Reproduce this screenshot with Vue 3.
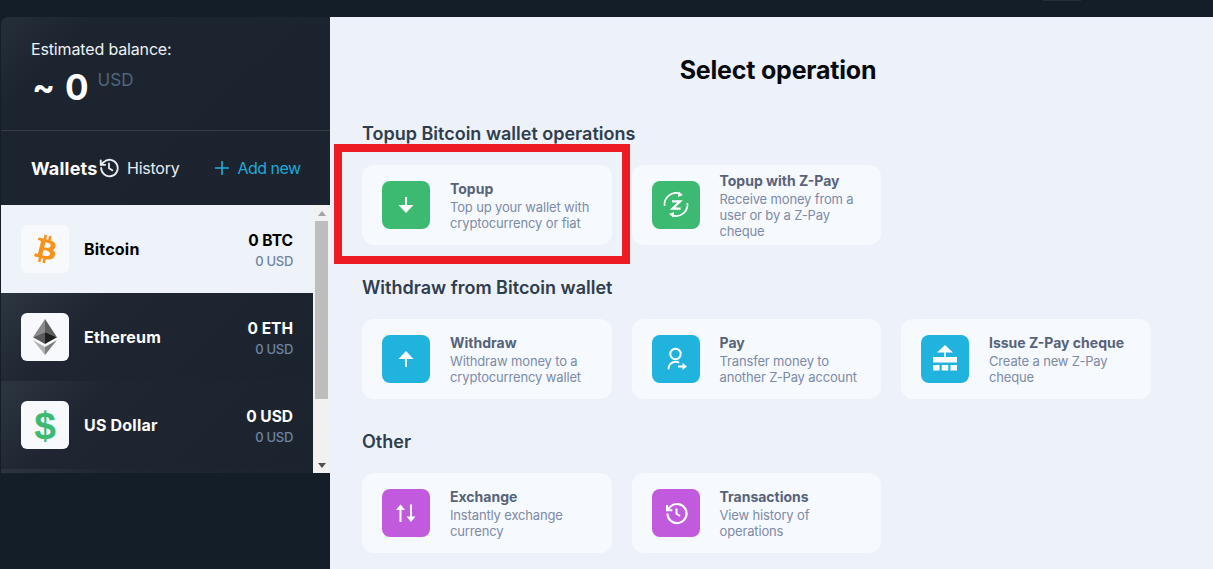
<script setup>
const wallets = [
  { id: 'btc', name: 'Bitcoin', amount: '0 BTC', usd: '0 USD', active: true },
  { id: 'eth', name: 'Ethereum', amount: '0 ETH', usd: '0 USD' },
  { id: 'usd', name: 'US Dollar', amount: '0 USD', usd: '0 USD' },
]
const sections = [
  { title: 'Topup Bitcoin wallet operations', color: 'green', items: [
    { icon: 'down', title: 'Topup', text: 'Top up your wallet with cryptocurrency or fiat' },
    { icon: 'zpay', title: 'Topup with Z-Pay', text: 'Receive money from a user or by a Z-Pay cheque' },
  ] },
  { title: 'Withdraw from Bitcoin wallet', color: 'blue', items: [
    { icon: 'up', title: 'Withdraw', text: 'Withdraw money to a cryptocurrency wallet' },
    { icon: 'pay', title: 'Pay', text: 'Transfer money to another Z-Pay account' },
    { icon: 'cheque', title: 'Issue Z-Pay cheque', text: 'Create a new Z-Pay cheque' },
  ] },
  { title: 'Other', color: 'purple', items: [
    { icon: 'swap', title: 'Exchange', text: 'Instantly exchange currency' },
    { icon: 'history', title: 'Transactions', text: 'View history of operations' },
  ] },
]
</script>

<template>
  <div class="page">
    <div class="topbar"><span class="top-tab"></span></div>
    <div class="content">
      <aside class="sidebar">
        <div class="panel">
          <div class="balance">
            <div class="balance-label">Estimated balance:</div>
            <div class="balance-value">
              <span class="tilde">~</span><span class="num">0</span><span class="cur">USD</span>
            </div>
          </div>
          <div class="wallet-head">
            <span class="wallets-title">Wallets</span>
            <svg class="hist-icon" viewBox="0 0 24 24" fill="none" stroke="#e9edf2" stroke-width="2" stroke-linecap="round" stroke-linejoin="round">
              <path d="M3.5 12a9 9 0 1 0 2.8-6.5L3 8.5" />
              <path d="M3 3.6V8.5h4.9" />
              <path d="M12 7v5.3l3.6 2.2" />
            </svg>
            <span class="hist-text">History</span>
            <span class="add">
              <svg class="plus" viewBox="0 0 16 16" fill="none" stroke="#1fb0dd" stroke-width="1.6"><path d="M8 1v14M1 8h14" /></svg>
              Add new
            </span>
          </div>
        </div>
        <div class="list-wrap">
          <div class="list">
            <div v-for="w in wallets" :key="w.id" class="wallet" :class="{ active: w.active }">
              <div class="coin">
                <svg v-if="w.id === 'btc'" class="coin-btc" viewBox="8.600 5.600 15.200 20.800">
                  <path fill="#f7931a" d="M23.189 14.02c.314-2.096-1.283-3.223-3.465-3.975l.708-2.84-1.728-.43-.69 2.765c-.454-.114-.92-.22-1.385-.326l.695-2.783L15.596 6l-.708 2.839c-.376-.086-.746-.17-1.104-.26l.002-.009-2.384-.595-.46 1.846s1.283.294 1.256.312c.7.175.826.638.805 1.006l-.806 3.235c.048.012.11.03.18.057l-.183-.045-1.13 4.532c-.086.212-.303.531-.793.41.018.025-1.256-.313-1.256-.313l-.858 1.978 2.25.561c.418.105.828.215 1.231.318l-.715 2.872 1.727.43.708-2.84c.472.127.93.245 1.378.357l-.706 2.828 1.728.43.715-2.866c2.948.558 5.164.333 6.097-2.333.752-2.146-.037-3.385-1.588-4.192 1.13-.26 1.98-1.003 2.207-2.538zm-3.95 5.538c-.533 2.147-4.148.986-5.32.695l.95-3.805c1.172.293 4.929.872 4.37 3.11zm.535-5.569c-.487 1.953-3.495.96-4.47.717l.86-3.45c.975.243 4.118.696 3.61 2.733z" />
                </svg>
                <svg v-else-if="w.id === 'eth'" class="coin-eth" viewBox="0 0 24 36">
                  <polygon points="12,0 0,18.3 12,13" fill="#8a8a8a" />
                  <polygon points="12,0 24,18.3 12,13" fill="#5d5d5d" />
                  <polygon points="0,18.3 12,13 12,25" fill="#5a5a5a" />
                  <polygon points="24,18.3 12,13 12,25" fill="#1e1e1e" />
                  <polygon points="0,21 12,28 12,36" fill="#b0b0b0" />
                  <polygon points="24,21 12,28 12,36" fill="#7c7c7c" />
                </svg>
                <span v-else class="coin-usd">$</span>
              </div>
              <div class="wallet-name">{{ w.name }}</div>
              <div class="wallet-amounts">
                <div class="amt">{{ w.amount }}</div>
                <div class="usd">{{ w.usd }}</div>
              </div>
            </div>
            <div class="wallet wallet-peek"></div>
          </div>
          <div class="scrollbar">
            <span class="arrow up"></span>
            <div class="track"><div class="thumb"></div></div>
            <span class="arrow down"></span>
          </div>
        </div>
      </aside>

      <main class="main">
        <h1 class="title">Select operation</h1>
        <section v-for="s in sections" :key="s.title" class="section">
          <h2 class="sec-title">{{ s.title }}</h2>
          <div class="cards">
            <div v-for="c in s.items" :key="c.title" class="card">
              <div class="op-icon" :class="s.color">
                <svg viewBox="0 0 48 48" width="48" height="48" fill="none" stroke="#fff" stroke-width="2">
                  <template v-if="c.icon === 'down'">
                    <path d="M24 16v9" />
                    <polygon points="16.5,24 31.5,24 24,32" fill="#fff" stroke="none" />
                  </template>
                  <template v-else-if="c.icon === 'up'">
                    <path d="M24 23v9" />
                    <polygon points="16.5,24 31.5,24 24,16" fill="#fff" stroke="none" />
                  </template>
                  <template v-else-if="c.icon === 'zpay'">
                    <path d="M12.600 25a11.500 11.500 0 0 1 15-12.400" stroke-width="1.700" />
                    <polygon points="31,14 26.500,10.500 26,16" fill="#fff" stroke="none" />
                    <path d="M35.400 22a11.500 11.500 0 0 1-15 12.400" stroke-width="1.700" />
                    <polygon points="17,33 21.500,36.500 22,31" fill="#fff" stroke="none" />
                    <path d="M20 20.300h8l-7.400 7.400h8" stroke-width="2.300" />
                  </template>
                  <template v-else-if="c.icon === 'pay'">
                    <circle cx="23.500" cy="19" r="5.200" />
                    <path d="M16.500 33.500c0-4 3.200-6.700 7.300-6.700 1 0 2 .2 2.700.5" stroke-linecap="round" />
                    <path d="M26 31.500h5" />
                    <polygon points="30.500,28 35,31.500 30.500,35" fill="#fff" stroke="none" />
                  </template>
                  <template v-else-if="c.icon === 'cheque'">
                    <polygon points="24,10 32,17.500 16,17.500" fill="#fff" stroke="none" />
                    <path d="M24 17v6" stroke-width="1.600" />
                    <rect x="12" y="22" width="24" height="5.500" fill="#fff" stroke="none" />
                    <rect x="12" y="30" width="6.500" height="5.500" fill="#fff" stroke="none" />
                    <rect x="20.750" y="30" width="6.500" height="5.500" fill="#fff" stroke="none" />
                    <rect x="29.500" y="30" width="6.500" height="5.500" fill="#fff" stroke="none" />
                  </template>
                  <template v-else-if="c.icon === 'swap'">
                    <path d="M18.500 20v13M29 15.500v13" stroke-width="2" />
                    <polygon points="14,21 23,21 18.500,15.500" fill="#fff" stroke="none" />
                    <polygon points="24.500,27.500 33.500,27.500 29,33" fill="#fff" stroke="none" />
                  </template>
                  <template v-else>
                    <path d="M15.500 24.500a9.500 9.500 0 1 0 2.800-6.700L15 21" stroke-width="2.200" />
                    <path d="M15 16v5.300h5.300" stroke-width="2" />
                    <path d="M24.500 19.500v5.300l3.600 2.200" stroke-width="2" />
                  </template>
                </svg>
              </div>
              <div class="card-body">
                <div class="card-title">{{ c.title }}</div>
                <div class="card-text">{{ c.text }}</div>
              </div>
            </div>
          </div>
        </section>
      </main>
    </div>
    <div class="highlight"></div>
  </div>
</template>

<style>
html, body { margin: 0; background: #141e29; overflow: hidden; }
</style>

<style scoped>
* { box-sizing: border-box; }
.page {
  position: relative;
  width: 1213px;
  height: 569px;
  overflow: hidden;
  display: flex;
  flex-direction: column;
  background: #141e29;
  font-family: Inter, "Open Sans", "Liberation Sans", sans-serif;
}
.topbar { position: relative; height: 17px; flex: none; background: #141e29; }
.top-tab { position: absolute; left: 1043px; top: 0; width: 38px; height: 1px; background: #252e38; }
.content { flex: 1; display: flex; min-height: 0; }
.sidebar { width: 330px; flex: none; padding-left: 1px; }
.panel {
  height: 188px;
  border-top-left-radius: 8px;
  background: linear-gradient(135deg, #252e39 0, #1c2430 18%, #1b232e 100%);
  color: #fff;
}
.balance { height: 114px; padding: 22px 0 0 30px; border-bottom: 1px solid #353c46; }
.balance-label { font-size: 16px; line-height: 20px; color: #eef1f5; letter-spacing: -0.15px; }
.balance-value { display: flex; align-items: flex-start; margin-top: 9px; }
.tilde { font-size: 34px; font-weight: 700; line-height: 38px; margin-left: 1px; width: 33px; }
.num { font-size: 35px; font-weight: 700; line-height: 38px; }
.cur { font-size: 17px; line-height: 22px; color: #53657a; margin-left: 9px; margin-top: 1px; }
.wallet-head { display: flex; align-items: center; height: 74px; padding-left: 30px; }
.wallets-title { font-size: 18px; font-weight: 700; letter-spacing: 0.2px; color: #fff; width: 67px; flex: none; white-space: nowrap; }
.hist-icon { width: 22px; height: 22px; flex: none; }
.hist-text { font-size: 16px; margin-left: 7px; color: #e9edf2; letter-spacing: -0.25px; }
.add { display: flex; align-items: center; margin-left: 35px; font-size: 16px; color: #1fa9d8; letter-spacing: -0.5px; }
.plus { width: 16px; height: 16px; margin-right: 7px; }
.list-wrap { display: flex; height: 268px; }
.list { width: 312px; overflow: hidden; }
.wallet {
  height: 88px;
  display: flex;
  align-items: center;
  padding: 0 20px;
  background: linear-gradient(135deg, #2c3540 0, #1f2631 28%, #1b232e 100%);
  color: #fff;
}
.wallet.active { background: #eef2f9; color: #000; }
.wallet-peek { flex: none; }
.coin {
  width: 48px;
  height: 48px;
  flex: none;
  border-radius: 6px;
  background: #f7f9fd;
  display: flex;
  align-items: center;
  justify-content: center;
}
.coin-btc { width: 23px; height: 30px; }
.coin-eth { width: 24px; height: 36px; }
.coin-usd {
  color: #3dba72;
  font: 700 39px/1 "Liberation Sans", sans-serif;
}
.wallet-name { margin-left: 15px; font-size: 16px; font-weight: 700; letter-spacing: 0.2px; flex: 1; }
.wallet-amounts { text-align: right; padding-top: 4px; }
.amt { font-size: 15.5px; font-weight: 700; line-height: 20px; }
.usd { font-size: 13px; font-weight: 500; line-height: 20px; color: #6f84a0; letter-spacing: -0.3px; }
.scrollbar { width: 17px; background: #f1f1f1; display: flex; flex-direction: column; align-items: center; }
.track { flex: 1; width: 100%; }
.thumb { width: 13px; height: 178px; margin: 0 auto; background: #bdbdbd; }
.arrow { width: 0; height: 0; border-left: 4px solid transparent; border-right: 4px solid transparent; flex: none; margin: 6px 0 5px; }
.arrow.up { border-bottom: 5px solid #a3a3a3; }
.arrow.down { border-top: 5px solid #505050; }
.main { flex: 1; background: #edf1f9; padding: 0 32px; }
.title { margin: 37px 0 5px; padding-left: 13px; font-size: 25px; line-height: 32px; font-weight: 700; color: #06090f; text-align: center; letter-spacing: -0.2px; }
.section { height: 154px; }
.sec-title { margin: 0; display: flex; align-items: flex-end; padding-bottom: 19px; height: 74px; font-size: 18px; line-height: 24px; font-weight: 600; color: #2f3d4e; }
.cards { display: flex; gap: 20px; }
.card {
  width: 249.5px;
  height: 80px;
  flex: none;
  display: flex;
  align-items: center;
  padding: 0 14px 0 20px;
  background: #f6f9fe;
  border-radius: 12px;
}
.op-icon { width: 48px; height: 48px; flex: none; border-radius: 8px; }
.op-icon svg { display: block; }
.green { background: #3dba72; }
.blue { background: #20b3de; }
.purple { background: #c25add; }
.card-body { margin-left: 20px; min-width: 0; padding-top: 1px; }
.card-title { font-size: 14px; line-height: 18px; font-weight: 700; color: #57637a; margin-bottom: 1px; }
.card-text { font-size: 13px; line-height: 16px; color: #7d8ba6; letter-spacing: -0.15px; }
.highlight {
  position: absolute;
  left: 334px;
  top: 144px;
  width: 296px;
  height: 120px;
  border: 8px solid #ed1c24;
}
</style>
